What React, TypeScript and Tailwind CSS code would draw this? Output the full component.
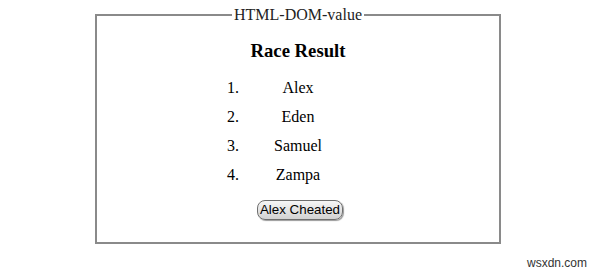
export default function App() {
  const racers = ['Alex', 'Eden', 'Samuel', 'Zampa'];

  return (
    <div className="relative w-[600px] h-[273px] overflow-hidden bg-white text-black font-['Liberation_Serif',serif]">
      <fieldset className="ml-[95px] mt-[6px] w-[406px] border-2 border-solid border-[#8a8a8a] pb-[22px]">
        <legend className="mx-auto px-[2px] text-[16px] leading-[18px] text-[#222]">HTML-DOM-value</legend>
        <h3 className="mt-[16px] text-center text-[18.72px] font-bold leading-[22px]">Race Result</h3>
        <ol className="mx-auto mt-[11px] w-[110px] list-decimal text-[16px]">
          {racers.map((name) => (
            <li key={name} className="text-center leading-[29px]">
              {name}
            </li>
          ))}
        </ol>
        <div className="mt-[11px] flex justify-center">
          <button className="ml-[4px] h-[20px] rounded-[8px] border border-[#6f6f6f] bg-linear-to-b from-[#f6f6f6] to-[#d2d2d2] px-[2px] text-[13.33px] leading-[16px] font-['Liberation_Sans',sans-serif] text-black shadow-[1px_1px_1px_#9a9a9a]">
            Alex Cheated
          </button>
        </div>
      </fieldset>
      <span className="absolute left-[527px] top-[256px] text-[12px] leading-[14px] text-[#333] font-['Liberation_Sans',sans-serif]">
        wsxdn.com
      </span>
    </div>
  );
}
